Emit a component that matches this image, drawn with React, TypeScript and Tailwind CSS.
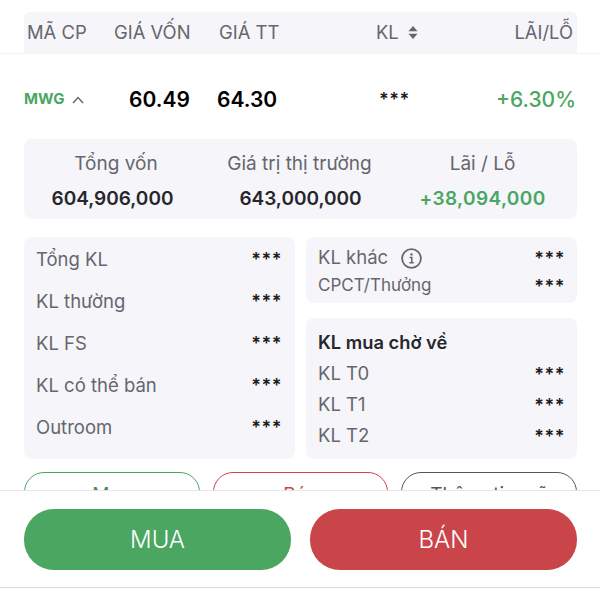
const leftRows = ["Tổng KL", "KL thường", "KL FS", "KL có thể bán", "Outroom"];
const waitingRows = ["KL T0", "KL T1", "KL T2"];

function Stars({ className = "mt-[2px]" }: { className?: string }) {
  return <span className={`text-[18px] font-semibold leading-none tracking-[0.5px] text-[#1c1c20] ${className}`}>***</span>;
}

function SummaryCell({ label, value, color }: { label: string; value: string; color: string }) {
  return (
    <div className="flex flex-col items-center">
      <span className="text-[19px] leading-[24px] text-[#66666c]">{label}</span>
      <span className={`mt-[11px] text-[19px] font-semibold leading-[24px] ${color}`}>{value}</span>
    </div>
  );
}

function InfoIcon() {
  return (
    <svg width="21" height="21" viewBox="0 0 21 21" fill="none" stroke="#66666c">
      <circle cx="10.5" cy="10.5" r="9.4" strokeWidth="1.8" />
      <circle cx="10.5" cy="6.4" r="1.2" fill="#66666c" stroke="none" />
      <path d="M8.6 9.5h2.2v5M8.4 14.8h4.4" strokeWidth="1.5" />
    </svg>
  );
}

export default function App() {
  return (
    <div className="h-[600px] w-[600px] overflow-hidden bg-white font-['Inter',sans-serif]">
      <div className="h-[490px] overflow-hidden">
        <div className="border-b border-[#f3f3f6] pl-6 pr-[23px] pt-3">
          <div className="flex h-[41px] items-center rounded-t-md bg-[#f5f5fa] pl-[3px] pr-[4px] text-[18.4px] text-[#66666c]">
            <span className="w-[87px]">MÃ CP</span>
            <span className="w-[105px]">GIÁ VỐN</span>
            <span className="w-[157px]">GIÁ TT</span>
            <span className="flex items-center gap-[9px]">
              KL
              <svg width="10" height="15" viewBox="0 0 10 15" fill="#66666c">
                <path d="M5 1 9.5 6.3H.5z" />
                <path d="M5 14 .5 8.7h9z" />
              </svg>
            </span>
            <span className="ml-auto">LÃI/LỖ</span>
          </div>
        </div>

        <div className="flex h-[85px] items-center pl-6 pr-[24px] pt-[6px]">
          <span className="flex w-[105px] items-center gap-[8px] text-[15px] font-bold text-[#4ba662]">
            MWG
            <svg width="12" height="8" viewBox="0 0 12 8" fill="none" stroke="#66666c" strokeWidth="1.4">
              <path d="M1 7l5-5.5L11 7" />
            </svg>
          </span>
          <span className="w-[88px] text-[21px] font-semibold text-black">60.49</span>
          <span className="w-[162px] text-[21px] font-semibold text-black">64.30</span>
          <Stars className="mt-0" />
          <span className="ml-auto text-[21px] font-medium text-[#4ba662]">+6.30%</span>
        </div>

        <div className="pl-6 pr-[23px]">
          <div className="grid h-[80px] grid-cols-[184px_183px_183px] content-center rounded-lg bg-[#f5f5fa] pt-[5px]">
            <SummaryCell label="Tổng vốn" value="604,906,000" color="mr-[7px] text-[#27272b]" />
            <SummaryCell label="Giá trị thị trường" value="643,000,000" color="ml-[2px] text-[#27272b]" />
            <SummaryCell label="Lãi / Lỗ" value="+38,094,000" color="tracking-[0.4px] text-[#4ba662]" />
          </div>

          <div className="mt-[18px] grid grid-cols-[271px_271px] gap-[11px]">
            <div className="flex h-[222px] flex-col gap-[18px] rounded-lg bg-[#f5f5fa] pl-[12px] pr-[13px] pt-[11px]">
              {leftRows.map((row) => (
                <div key={row} className="flex h-[24px] items-center justify-between">
                  <span className="text-[18.5px] text-[#66666c]">{row}</span>
                  <Stars className="mt-0" />
                </div>
              ))}
            </div>

            <div className="flex flex-col gap-[15px]">
              <div className="flex h-[66px] flex-col justify-center gap-[4px] rounded-lg bg-[#f5f5fa] pl-[12px] pr-[12px] pt-[4px]">
                <div className="flex h-[24px] items-center justify-between">
                  <span className="flex items-center gap-[13px] text-[18.5px] text-[#66666c]">
                    KL khác
                    <InfoIcon />
                  </span>
                  <Stars />
                </div>
                <div className="flex h-[24px] items-center justify-between">
                  <span className="text-[17px] text-[#66666c]">CPCT/Thưởng</span>
                  <Stars />
                </div>
              </div>

              <div className="flex h-[141px] flex-col gap-[7px] rounded-lg bg-[#f5f5fa] pl-[12px] pr-[12px] pt-[14px]">
                <span className="mb-[2px] text-[18.3px] font-semibold leading-[21px] text-[#27272b]">KL mua chờ về</span>
                {waitingRows.map((row) => (
                  <div key={row} className="flex h-[24px] items-center justify-between">
                    <span className="text-[18.5px] text-[#66666c]">{row}</span>
                    <Stars />
                  </div>
                ))}
              </div>
            </div>
          </div>

          <div className="mt-[13px] grid grid-cols-3 gap-[13px]">
            <div className="flex h-[50px] justify-center rounded-[20px] border-[1.5px] border-[#4ba662] pt-[8px] text-[19px] text-[#3f8f54]">Mua</div>
            <div className="flex h-[50px] justify-center rounded-[20px] border-[1.5px] border-[#c94549] pt-[8px] text-[19px] text-[#c94549]">Bán</div>
            <div className="flex h-[50px] justify-center rounded-[20px] border-[1.5px] border-[#55555a] pt-[8px] text-[19px] text-[#55555a]">Thông tin mã</div>
          </div>
        </div>
      </div>

      <div className="border-t border-[#e6e6ea] bg-white">
        <div className="flex h-[97px] items-start gap-[19px] border-b border-[#dcdcdf] pl-6 pr-[23px] pt-[18px]">
          <button type="button" className="flex h-[61px] flex-1 items-center justify-center rounded-[30px] bg-[#4ba662] text-[24px] font-light text-white">MUA</button>
          <button type="button" className="flex h-[61px] flex-1 items-center justify-center rounded-[30px] bg-[#c94549] text-[24px] font-light text-white">BÁN</button>
        </div>
      </div>
    </div>
  );
}
